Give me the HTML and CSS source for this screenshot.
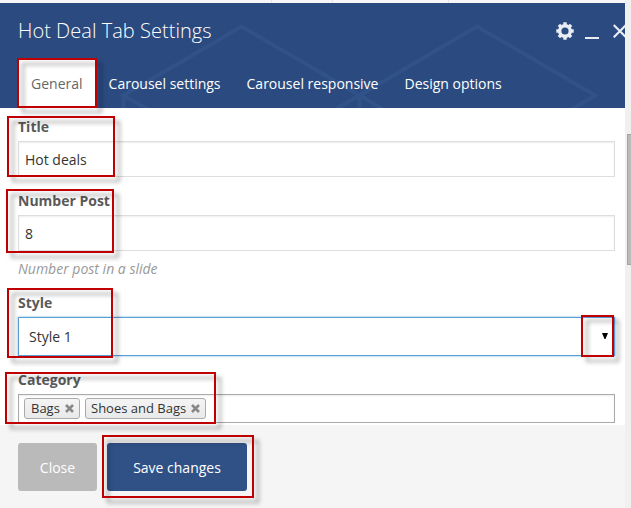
FILE: index.html
```html
<!DOCTYPE html>
<html lang="en">
<head>
<meta charset="utf-8">
<title>Hot Deal Tab Settings</title>
<link rel="stylesheet" href="styles.css">
</head>
<body>
<div class="window">
  <div class="panel">
    <div class="strip"><i></i><i></i><i></i></div>
    <header class="header">
      <svg class="pattern" width="625" height="105" viewBox="0 3 625 105" fill="none" stroke="#305289" stroke-width="4">
        <path d="M148 109.500 123.500 95.500 241.500 26.500 382 108.500M337 108.500 477 26.500 595.500 95.500 572 109M123.500 95V109M359.500 95V109"/>
      </svg>
      <div class="title-row">
        <h1>Hot Deal Tab Settings</h1>
        <div class="controls">
          <svg width="18" height="18" viewBox="0 0 18 18"><circle cx="9" cy="9" r="5.300" fill="none" stroke="#e9edf3" stroke-width="3.400"/><path d="M9 .3V3M9 15V17.700M.3 9H3M15 9H17.700M2.900 2.900 4.800 4.800M13.200 13.200 15.100 15.100M2.900 15.100 4.800 13.200M13.200 4.800 15.100 2.900" stroke="#e9edf3" stroke-width="3.400"/></svg>
          <span class="minimize"></span>
          <svg class="close-icon" width="12" height="14" viewBox="0 0 12 14"><path d="M.7 1 13 13.300M.7 13.300 13 1" stroke="#e9edf3" stroke-width="2.200"/></svg>
        </div>
      </div>
      <nav class="tabs">
        <span class="tab active">General</span>
        <span class="tab">Carousel settings</span>
        <span class="tab">Carousel responsive</span>
        <span class="tab">Design options</span>
      </nav>
    </header>
    <main class="fields">
      <label>Title</label>
      <div class="input">Hot deals</div>
      <label class="number-label">Number Post</label>
      <div class="input">8</div>
      <p class="hint">Number post in a slide</p>
      <label>Style</label>
      <div class="select"><span>Style 1</span><svg width="6" height="6" viewBox="0 0 6 6"><path d="M0 0H6L3.500 6H2.500Z"/></svg></div>
      <label class="category-label">Category</label>
      <div class="tokens">
        <span class="token">Bags<svg width="9" height="9" viewBox="0 0 9 9"><path d="M1 1 8 8M8 1 1 8"/></svg></span>
        <span class="token">Shoes and Bags<svg width="9" height="9" viewBox="0 0 9 9"><path d="M1 1 8 8M8 1 1 8"/></svg></span>
      </div>
    </main>
    <footer class="footer">
      <button class="btn">Close</button>
      <button class="btn primary">Save changes</button>
    </footer>
  </div>
  <aside class="scrollbar"><div class="thumb"></div></aside>
  <div class="mark mark-tab"></div>
  <div class="mark mark-title"></div>
  <div class="mark mark-number"></div>
  <div class="mark mark-style"></div>
  <div class="mark mark-arrow"></div>
  <div class="mark mark-category"></div>
  <div class="mark mark-save"></div>
</div>
</body>
</html>
```
FILE: styles.css
```css
* { box-sizing: border-box; }
body { margin: 0; overflow: hidden; font-family: "Open Sans", sans-serif; font-size: 14px; color: #333; }
.window { position: relative; display: flex; width: 631px; height: 508px; overflow: hidden; background: #f5f5f5; }
.panel { width: 625px; display: flex; flex-direction: column; }
.strip { flex: none; display: grid; grid-template-columns: 272px 61px 116px; height: 3px; background: #f7f7f7; }
.strip i { border-right: 1px solid #e6e6e6; }
.header { flex: none; position: relative; height: 105px; background: #2b4b80; color: #fff; display: flex; flex-direction: column; justify-content: space-between; overflow: hidden; }
.pattern { position: absolute; left: 0; top: 0; }
.title-row { position: relative; display: flex; justify-content: space-between; height: 55px; padding: 14px 0 0 18px; }
h1 { margin: 0; font-size: 20px; line-height: 28px; font-weight: 300; letter-spacing: .03px; white-space: nowrap; }
.controls { display: flex; align-items: flex-start; padding-top: 5px; }
.minimize { width: 14px; height: 2px; margin: 15px 14px 0 11px; background: #e9edf3; }
.close-icon { margin-top: 2px; }
.tabs { position: relative; display: flex; padding-left: 18px; }
.tab { height: 50px; padding: 0 13px; line-height: 52px; white-space: nowrap; }
.tab.active { width: 77.600px; background: #fff; color: #666; border-radius: 3px 3px 0 0; }
.fields { flex: none; height: 317px; padding: 9px 10px 0 18px; background: #fff; overflow: hidden; }
label { display: block; height: 24px; line-height: 20px; font-weight: 700; color: #5a5a5a; }
.number-label { margin-top: 14px; }
.input { height: 36px; padding: 0 6px; line-height: 36px; border: 1px solid #ddd; box-shadow: inset 0 1px 2px rgba(0,0,0,.07); }
.hint { margin: 8px 0 14px; height: 20px; line-height: 20px; font-style: italic; color: #999; }
.select { display: flex; justify-content: space-between; align-items: center; height: 39px; padding: 0 6px 0 10px; border: 1px solid #5b9dd9; box-shadow: 0 0 2px rgba(30,140,190,.6); }
.select svg { margin-top: -2px; }
.category-label { margin-top: 14px; }
.tokens { display: flex; gap: 5px; height: 29px; padding: 3px 5px; border: 1px solid #aaa; box-shadow: inset 0 1px 2px rgba(0,0,0,.08); }
.input, .select, .tokens { width: 597px; }
.token { display: flex; align-items: center; gap: 5px; height: 21px; padding: 0 5px; font-size: 13px; line-height: 19px; white-space: nowrap; border: 1px solid #aaa; border-radius: 3px; background: linear-gradient(#f4f4f4, #e9e9e9); }
.token:first-child { width: 56px; padding-left: 6px; }
.token svg { flex: none; stroke: #888; stroke-width: 2.600; }
.footer { display: flex; flex: 1; align-items: flex-start; gap: 10px; padding: 18px 18px 0; background: #f5f5f5; }
.btn { width: 79px; height: 48px; padding: 0; border: 0; border-radius: 3px; background: #bababa; color: #fff; font: 14px "Open Sans", sans-serif; }
.btn.primary { width: 140px; background: #305186; }
.scrollbar { width: 6px; padding: 134px 0 0 2px; background: #f0f0f0; }
.thumb { height: 131px; border: 1px solid #a4a4a4; border-right: 0; background: #bababa; }
.mark { position: absolute; border: 2px solid #c00000; filter: drop-shadow(5px 5px 2px rgba(0,0,0,.36)); }
.mark-tab { left: 17px; top: 58px; width: 80px; height: 50px; }
.mark-title { left: 7px; top: 116px; width: 108px; height: 61px; }
.mark-number { left: 6px; top: 189px; width: 108px; height: 64px; }
.mark-style { left: 7px; top: 288px; width: 106px; height: 70px; }
.mark-arrow { left: 581px; top: 315px; width: 33px; height: 42px; }
.mark-category { left: 5px; top: 372px; width: 211px; height: 52px; }
.mark-save { left: 102px; top: 435px; width: 152px; height: 63px; }
```
